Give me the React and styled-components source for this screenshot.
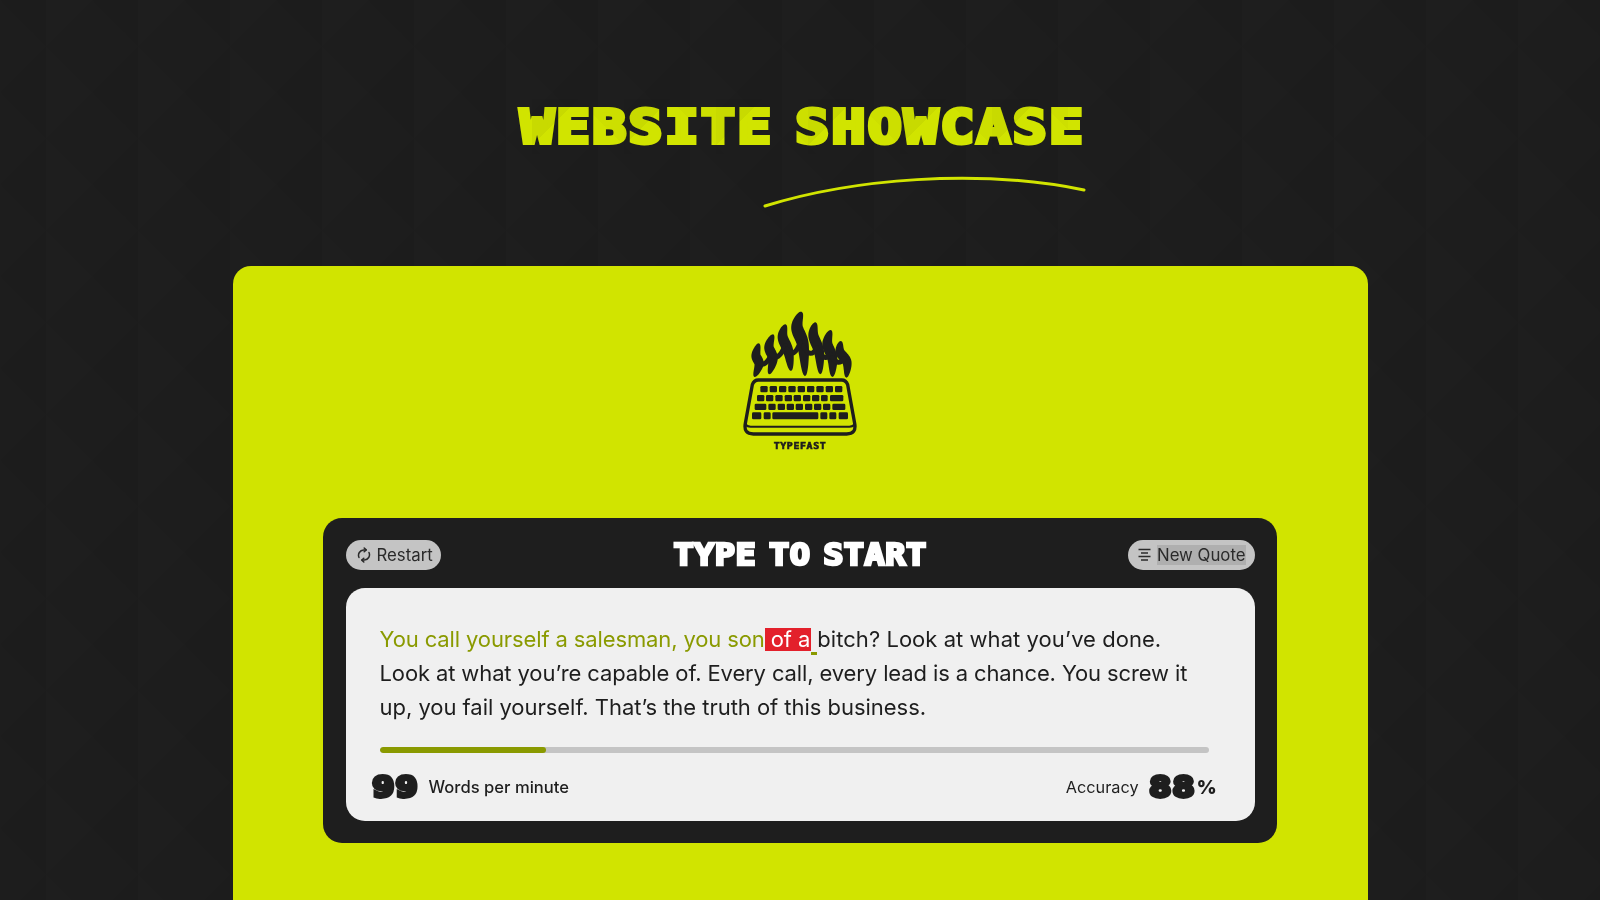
import React from "react";
import styled, { createGlobalStyle } from "styled-components";

const YELLOW = "#d1e400";
const INK = "#1e1e1e";

const Global = createGlobalStyle`
  html, body { margin: 0; height: 900px; overflow: hidden; background: #1d1d1d; }
  #root { height: 900px; }
  * { box-sizing: border-box; }
`;

const tile = (a, b) => `
  linear-gradient(45deg, ${a} 25%, transparent 25%),
  linear-gradient(-45deg, ${b} 25%, transparent 25%),
  linear-gradient(45deg, transparent 75%, ${b} 75%),
  linear-gradient(-45deg, transparent 75%, ${a} 75%)
`;

const Page = styled.div`
  height: 900px;
  overflow: hidden;
  display: flex;
  flex-direction: column;
  align-items: center;
  background-color: #1d1d1d;
  background-image: ${tile("#1e1e1e", "#1c1c1c")};
  background-size: 92px 92px;
  background-position: 46px 0;
  font-family: Inter, "Liberation Sans", sans-serif;
`;

const Display = styled.span`
  font-family: "DejaVu Sans Mono", "DejaVu Sans", monospace;
  font-weight: 700;
  text-transform: uppercase;
  white-space: nowrap;
  line-height: 1;
  display: inline-block;
`;

const Title = styled.h1`
  position: relative;
  margin: 99px 0 0;
  padding-left: 5px;
  height: 55px;
  display: flex;
  align-items: center;
  font-size: 47px;
  font-weight: 700;
  color: ${YELLOW};
  &::after {
    content: "";
    position: absolute;
    inset: 0 -30px;
    pointer-events: none;
    mix-blend-mode: multiply;
    background-image: ${tile("#f4f4f4", "#fafafa")};
    background-size: 92px 92px;
  }
`;

const TitleText = styled(Display)`
  -webkit-text-stroke: 4px ${YELLOW};
  letter-spacing: 1.9px;
  word-spacing: -12px;
  transform: scaleX(1.2);
`;

const Swoosh = styled.svg`
  display: block;
  width: 1136px;
  height: 112px;
  flex: none;
`;

const Panel = styled.main`
  width: 1135px;
  flex: 1;
  min-height: 0;
  background: ${YELLOW};
  border-radius: 18px 18px 0 0;
  display: flex;
  flex-direction: column;
  align-items: center;
  padding-top: 34px;
`;

const LogoWrap = styled.div`
  position: relative;
  width: 180px;
  height: 160px;
  margin-bottom: 58px;
  flex: none;
`;

const LogoArt = styled.svg`
  display: block;
  width: 180px;
  height: 160px;
`;

const LogoText = styled(Display)`
  position: absolute;
  left: 0;
  right: 0;
  top: 142px;
  text-align: center;
  font-size: 9px;
  letter-spacing: 0.55px;
  color: ${INK};
  -webkit-text-stroke: 0.6px ${INK};
  transform: scaleX(1.1);
`;

const Card = styled.section`
  width: 954px;
  height: 325px;
  flex: none;
  background: ${INK};
  border-radius: 19px;
  padding: 22px 22.5px;
  display: flex;
  flex-direction: column;
  gap: 18px;
`;

const Header = styled.header`
  height: 30px;
  display: grid;
  grid-template-columns: 1fr auto 1fr;
  grid-template-rows: 30px;
  align-items: center;
`;

const Pill = styled.button`
  justify-self: ${(p) => (p.$end ? "end" : "start")};
  height: 30px;
  padding: 0 ${(p) => (p.$end ? "9px" : "8px")} 0 ${(p) => (p.$end ? "10px" : "11px")};
  border: 0;
  border-radius: 15px;
  background: #c4c4c4;
  color: #2a2a2a;
  display: flex;
  align-items: center;
  gap: 6px;
  font-family: inherit;
  font-size: 16.8px;
`;

const Selected = styled.span`
  display: inline-block;
  background: ${(p) => (p.$on ? "#afafaf" : "transparent")};
  line-height: 20px;
`;

const CardTitle = styled(Display)`
  font-size: 30px;
  color: #fff;
  -webkit-text-stroke: 2.6px #fff;
  letter-spacing: 0.4px;
  word-spacing: -7px;
  transform: scaleX(1.12);
`;

const Board = styled.div`
  flex: 1;
  background: #f0f0f0;
  border-radius: 19px;
  padding: 34px 46px 0 34px;
`;

const Quote = styled.p`
  margin: 0;
  height: 102px;
  font-size: 22px;
  line-height: 34px;
  color: ${INK};
  white-space: nowrap;
`;

const Run = styled.span`
  letter-spacing: ${(p) => p.$ls}px;
`;

const Typed = styled(Run)`
  color: #8a9a00;
`;

const Wrong = styled.span`
  display: inline-block;
  line-height: 23px;
  letter-spacing: -0.12px;
  background: #e3202b;
  color: #fff;
  padding: 0 1px 0 6px;
`;

const Caret = styled.span`
  border-bottom: 3px solid #8a9a00;
`;

const Track = styled.div`
  height: 6px;
  margin-top: 23px;
  border-radius: 3px;
  background: #c4c4c4;
  overflow: hidden;
`;

const Fill = styled.div`
  height: 100%;
  background: #8a9a00;
  border-radius: 3px;
`;

const Stats = styled.div`
  margin: 20px -8px 0;
  height: 28px;
  display: flex;
  align-items: center;
  justify-content: space-between;
`;

const Stat = styled.div`
  display: flex;
  align-items: center;
  gap: 10px;
`;

const StatLabel = styled.span`
  font-size: ${(p) => (p.$light ? "16.3px" : "16.6px")};
  font-weight: ${(p) => (p.$light ? 400 : 500)};
  color: ${INK};
`;

const Figure = styled.span`
  display: flex;
  align-items: center;
  color: ${INK};
`;

const Digits = styled(Display)`
  font-size: 29px;
  width: 47px;
  text-align: center;
  -webkit-text-stroke: 3.8px ${INK};
  letter-spacing: 1px;
  transform: scaleX(1.26);
`;

const Percent = styled.span`
  font-size: 19px;
  font-weight: 900;
  margin-left: 1px;
`;

// A flame tongue: a tapered ribbon along a Catmull-Rom centre line, peak to foot.
function ribbon(pts, width) {
  const all = [pts[0], ...pts, pts[pts.length - 1]];
  const samples = [];
  for (let i = 1; i < all.length - 2; i++) {
    const [p0, p1, p2, p3] = [all[i - 1], all[i], all[i + 1], all[i + 2]];
    for (let s = 0; s < 12; s++) {
      const t = s / 12;
      const f = (a, b, c, d) =>
        0.5 * (2 * b + (c - a) * t + (2 * a - 5 * b + 4 * c - d) * t * t + (3 * b - a - 3 * c + d) * t * t * t);
      samples.push([f(p0[0], p1[0], p2[0], p3[0]), f(p0[1], p1[1], p2[1], p3[1])]);
    }
  }
  samples.push(pts[pts.length - 1]);
  const left = [];
  const right = [];
  samples.forEach((p, i) => {
    const a = samples[Math.max(0, i - 1)];
    const b = samples[Math.min(samples.length - 1, i + 1)];
    const dx = b[0] - a[0];
    const dy = b[1] - a[1];
    const len = Math.hypot(dx, dy) || 1;
    const u = i / (samples.length - 1);
    const h = (width / 2) * Math.pow(Math.sin(Math.PI * u), 0.6);
    left.push(`${(p[0] - (dy / len) * h).toFixed(1)} ${(p[1] + (dx / len) * h).toFixed(1)}`);
    right.unshift(`${(p[0] + (dy / len) * h).toFixed(1)} ${(p[1] - (dx / len) * h).toFixed(1)}`);
  });
  return `M${left.join(" L")} L${right.join(" L")}Z`;
}

const TONGUES = [
  { pts: [[42, 115], [33, 150], [42, 178], [28, 216]], w: 30 },
  { pts: [[85, 88], [72, 125], [84, 162], [72, 208]], w: 31 },
  { pts: [[122, 58], [113, 95], [130, 140], [138, 198]], w: 33 },
  { pts: [[170, 20], [156, 65], [174, 120], [180, 214]], w: 38 },
  { pts: [[212, 52], [205, 90], [222, 140], [226, 208]], w: 33 },
  { pts: [[258, 75], [247, 115], [262, 160], [262, 216]], w: 33 },
  { pts: [[288, 108], [285, 140], [306, 172], [304, 218]], w: 30 }
];

const ARCS = [
  "M38 166 Q56 194 78 152",
  "M80 148 Q100 172 120 122",
  "M126 132 Q146 164 166 112",
  "M176 124 Q196 164 216 128",
  "M222 140 Q240 170 256 148",
  "M262 158 Q280 184 296 162"
];

const keyRows = [
  { y: 258, keys: [[151, 22], [179, 22], [207, 22], [235, 22], [263, 22], [291, 22], [319, 22], [347, 22], [375, 22]] },
  { y: 285, keys: [[141, 22], [168, 22], [196, 22], [224, 22], [251, 22], [279, 22], [306, 22], [333, 20], [360, 40]] },
  { y: 311, keys: [[134, 35], [175, 22], [203, 22], [230, 22], [257, 22], [285, 22], [312, 22], [339, 22], [367, 39]] },
  { y: 337, keys: [[126, 28], [161, 21], [187, 138], [331, 21], [358, 21], [386, 28]] }
];

function Logo() {
  return (
    <LogoWrap>
      <LogoArt viewBox="0 0 540 480" aria-hidden="true">
        <g transform="translate(105 15)">
          {TONGUES.map((t, i) => (
            <path key={i} d={ribbon(t.pts, t.w)} fill={INK} />
          ))}
          {ARCS.map((d, i) => (
            <path key={i} d={d} fill="none" stroke={INK} strokeWidth="15" strokeLinecap="round" />
          ))}
        </g>
        <path
          d="M145 240 H395 Q408 240 413 254 L434 370 Q440 402 410 402 H130 Q100 402 106 370 L127 254 Q132 240 145 240Z"
          fill="none"
          stroke={INK}
          strokeWidth="10"
        />
        <path d="M106 372 Q110 380 122 380 H418 Q430 380 434 372" fill="none" stroke={INK} strokeWidth="6" />
        {keyRows.map((row) =>
          row.keys.map(([x, w]) => (
            <rect key={`${row.y}-${x}`} x={x} y={row.y} width={w} height={row.y === 337 ? 21 : 19} rx="4" fill={INK} />
          ))
        )}
      </LogoArt>
      <LogoText>Typefast</LogoText>
    </LogoWrap>
  );
}

function RestartIcon() {
  return (
    <svg width="14" height="16" viewBox="0 0 14 16" fill="none" stroke="#2a2a2a" strokeWidth="1.5" strokeLinecap="round" strokeLinejoin="round" aria-hidden="true">
      <path d="M2 10.5 A5.4 5.4 0 0 1 6.6 2.9 L9 2.9" />
      <path d="M7.2 1 L9.2 2.9 L7.2 4.8" />
      <path d="M12 5.5 A5.4 5.4 0 0 1 7.4 13.1 L5 13.1" />
      <path d="M6.8 11.2 L4.8 13.1 L6.8 15" />
    </svg>
  );
}

function LinesIcon() {
  return (
    <svg width="13" height="14" viewBox="0 0 13 14" fill="none" stroke="#2a2a2a" strokeWidth="1.5" aria-hidden="true">
      <path d="M0.5 1.5 H12.5 M3 5 H10 M0.5 8.5 H12.5 M3 12 H10" />
    </svg>
  );
}

export default function App() {
  return (
    <Page>
      <Global />
      <Title>
        <TitleText>Website Showcase</TitleText>
      </Title>
      <Swoosh viewBox="0 0 1136 112" aria-hidden="true">
        <path d="M533 52 C620 25 745 14 852 36" fill="none" stroke={YELLOW} strokeWidth="3" strokeLinecap="round" />
      </Swoosh>
      <Panel>
        <Logo />
        <Card>
          <Header>
            <Pill>
              <RestartIcon />
              <span>Restart</span>
            </Pill>
            <CardTitle>Type to start</CardTitle>
            <Pill $end>
              <LinesIcon />
              <Selected $on>New Quote</Selected>
            </Pill>
          </Header>
          <Board>
            <Quote>
              <Typed $ls={-0.12}>You call yourself a salesman, you son</Typed>
              <Wrong>of a</Wrong>
              <Caret> </Caret>
              <Run $ls={0.04}>bitch? Look at what you’ve done.</Run>
              <br />
              <Run $ls={-0.12}>Look at what you’re capable of. Every call, every lead is a chance. You screw it</Run>
              <br />
              <Run $ls={-0.03}>up, you fail yourself. That’s the truth of this business.</Run>
            </Quote>
            <Track>
              <Fill style={{ width: "20.1%" }} />
            </Track>
            <Stats>
              <Stat>
                <Figure>
                  <Digits>99</Digits>
                </Figure>
                <StatLabel>Words per minute</StatLabel>
              </Stat>
              <Stat>
                <StatLabel $light>Accuracy</StatLabel>
                <Figure>
                  <Digits>88</Digits>
                  <Percent>%</Percent>
                </Figure>
              </Stat>
            </Stats>
          </Board>
        </Card>
      </Panel>
    </Page>
  );
}
